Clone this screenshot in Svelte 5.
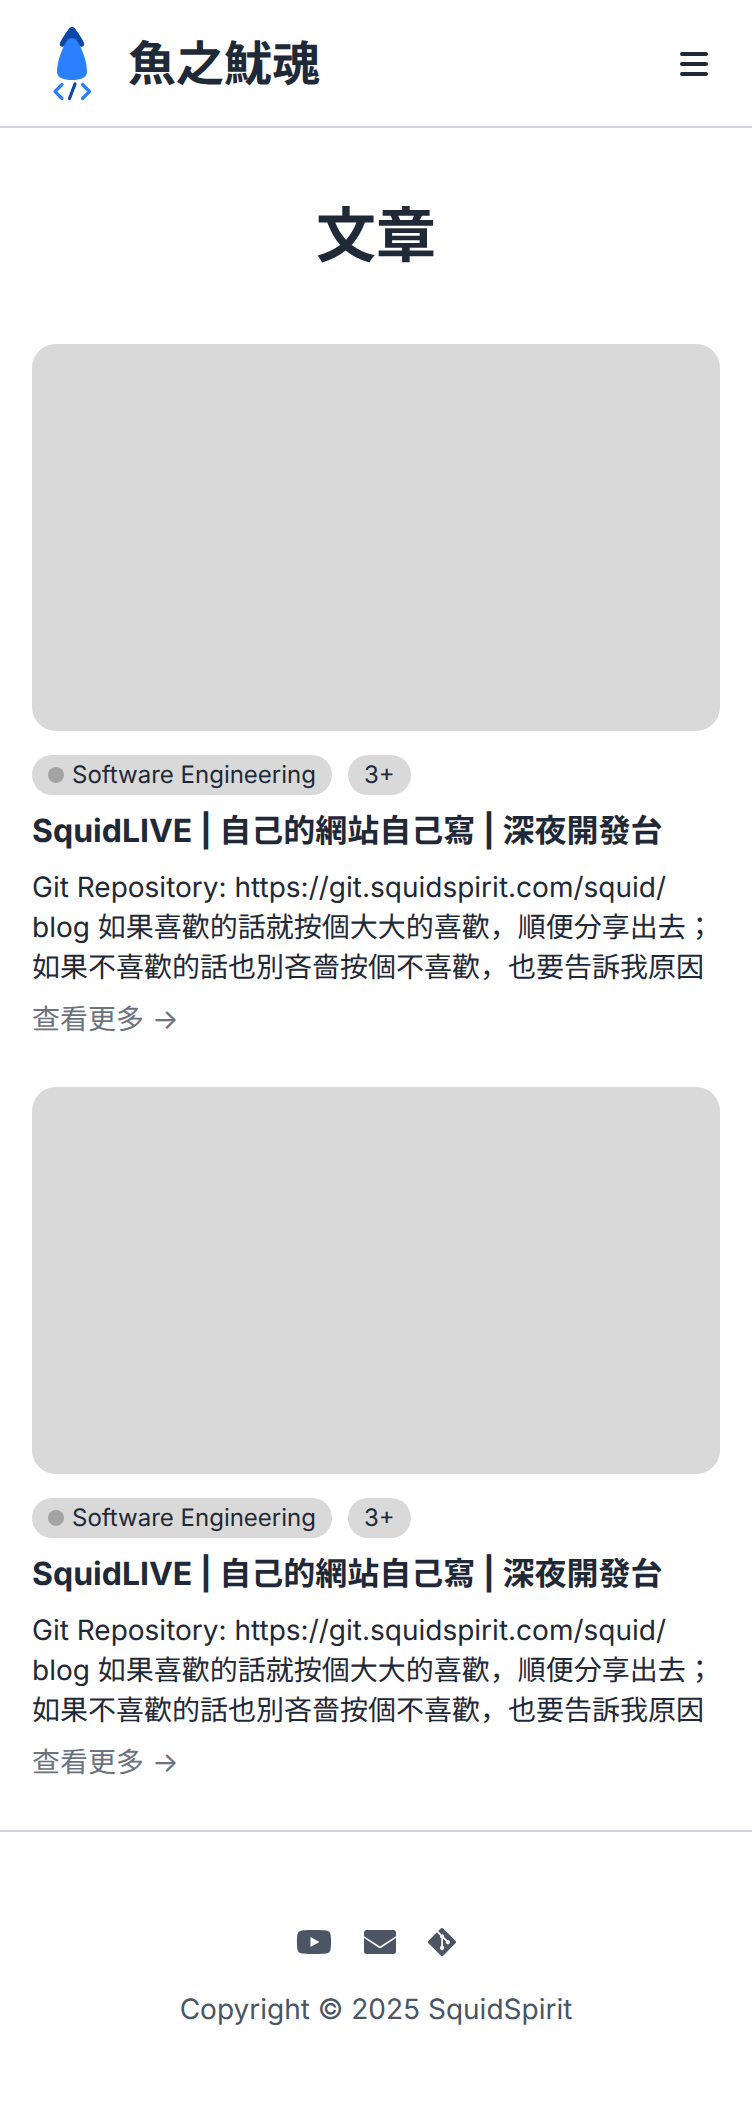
<script>
  const posts = [1, 2];
</script>

<div class="page">
  <header class="nav">
    <div class="brand">
      <svg class="logo" width="48" height="80" viewBox="48 24 48 80" aria-hidden="true">
        <path d="M72 27 C74 27 75 28 76 30 C79 34 82 38 84 43 C85 46 82 48 79 46 L65 46 C62 48 59 46 60 43 C62 38 65 34 68 30 C69 28 70 27 72 27 Z" fill="#0b48a8"/>
        <path d="M72 38 C75 38 77 40 79 44 C83 52 87 62 87 72 C87 78 80 80 72 80 C64 80 57 78 57 72 C57 62 61 52 65 44 C67 40 69 38 72 38 Z" fill="#2a7fff"/>
        <path d="M62 84.500 L55 91.500 L62 98.500 M82.500 84.500 L89.500 91.500 L82.500 98.500" fill="none" stroke="#2a7fff" stroke-width="3.200" stroke-linecap="round" stroke-linejoin="round"/>
        <path d="M75 84 L69.500 98.500" fill="none" stroke="#0b48a8" stroke-width="3.200" stroke-linecap="round"/>
      </svg>
      <span class="name">魚之魷魂</span>
    </div>
    <svg class="menu" width="28" height="32" viewBox="0 0 28 32" aria-hidden="true">
      <path d="M2 6h24M2 16h24M2 26h24" stroke="#1f2937" stroke-width="4" stroke-linecap="round"/>
    </svg>
  </header>

  <main class="main">
    <h1>文章</h1>
    <div class="list">
      {#each posts as post (post)}
        <article class="card">
          <div class="thumb"></div>
          <div class="chips">
            <span class="chip"><i class="dot"></i><span class="label">Software Engineering</span></span>
            <span class="chip more"><span class="label">3+</span></span>
          </div>
          <h2>SquidLIVE | 自己的網站自己寫 | 深夜開發台</h2>
          <p>Git Repository: https://git.squidspirit.com/squid/<wbr>blog 如果喜歡的話就按個大大的喜歡&#xFF0C;順便分享出去&#xFF1B;如果不喜歡的話也別吝嗇按個不喜歡&#xFF0C;也要告訴我原因</p>
          <a class="link" href="#top">查看更多 <span class="arrow">→</span></a>
        </article>
      {/each}
    </div>
  </main>

  <footer class="footer">
    <div class="icons">
      <svg width="36" height="32" viewBox="0 0 576 512" aria-hidden="true">
        <path d="M549.655 124.083c-6.281-23.65-24.787-42.276-48.284-48.597C458.781 64 288 64 288 64S117.22 64 74.629 75.486c-23.497 6.322-42.003 24.947-48.284 48.597-11.412 42.867-11.412 132.305-11.412 132.305s0 89.438 11.412 132.305c6.281 23.65 24.787 41.5 48.284 47.821C117.22 448 288 448 288 448s170.78 0 213.371-11.486c23.497-6.321 42.003-24.171 48.284-47.821 11.412-42.867 11.412-132.305 11.412-132.305s0-89.438-11.412-132.305zm-317.51 213.508V175.185l142.739 81.205-142.739 81.201z" fill="#4b5563"/>
      </svg>
      <svg width="32" height="32" viewBox="0 0 32 32" aria-hidden="true">
        <path d="M2.500 4 H29.500 C31 4 32 5 32 6.500 V10.200 L16 20.600 L0 10.200 V6.500 C0 5 1 4 2.500 4 Z" fill="#4b5563"/>
        <path d="M0 12 L14.800 21.700 C15.600 22.200 16.400 22.200 17.200 21.700 L32 12 V25.500 C32 27 31 28 29.500 28 H2.500 C1 28 0 27 0 25.500 Z" fill="#4b5563"/>
      </svg>
      <svg width="28" height="32" viewBox="0 0 448 512" aria-hidden="true">
        <path d="M439.55 236.05L244 40.45a28.87 28.87 0 0 0-40.81 0l-40.66 40.63 51.52 51.52c27.06-9.14 52.68 16.77 43.39 43.68l49.66 49.66c34.23-11.8 61.18 31 35.47 56.69-26.49 26.49-70.21-2.87-56-37.34L240.22 199v121.85c25.3 12.54 22.26 41.85 9.08 55a34.34 34.34 0 0 1-48.55 0c-17.57-17.6-11.07-46.91 11.25-56v-123c-20.8-8.51-24.6-30.74-18.64-45L142.57 101 8.45 235.14a28.86 28.86 0 0 0 0 40.81l195.61 195.6a28.86 28.86 0 0 0 40.8 0l194.69-194.69a28.86 28.86 0 0 0 0-40.81z" fill="#4b5563"/>
      </svg>
    </div>
    <div class="copy">Copyright © 2025 SquidSpirit</div>
  </footer>
</div>

<style>
  :global(body) {
    margin: 0;
    background: #fff;
  }
  .page {
    font-family: Inter, "Noto Sans CJK JP", sans-serif;
    color: #1f2937;
    text-rendering: geometricPrecision;
  }
  .nav {
    height: 128px;
    box-sizing: border-box;
    box-shadow: inset 0 -2px 0 #d1d5db;
    display: flex;
    align-items: center;
    justify-content: space-between;
    padding: 0 44px 0 48px;
  }
  .brand {
    display: flex;
    align-items: center;
    gap: 32px;
  }
  .logo {
    display: block;
  }
  .name {
    font-size: 48px;
    font-weight: 700;
    line-height: 72px;
  }
  .menu {
    display: block;
  }
  .main {
    padding: 66px 32px 0;
  }
  h1 {
    margin: 0;
    text-align: center;
    font-size: 60px;
    line-height: 84px;
    font-weight: 700;
  }
  .list {
    margin-top: 66px;
    display: flex;
    flex-direction: column;
    gap: 48px;
  }
  .card {
    display: flex;
    flex-direction: column;
  }
  .thumb {
    height: 387px;
    background: #d9d9d9;
    border-radius: 24px;
  }
  .chips {
    margin-top: 24px;
    display: flex;
    gap: 16px;
  }
  .chip {
    height: 40px;
    display: flex;
    align-items: center;
    gap: 8px;
    padding: 0 16px;
    border-radius: 20px;
    background: #d9d9d9;
    font-size: 24px;
    box-sizing: border-box;
  }
  .label {
    padding-bottom: 1px;
  }
  .dot {
    width: 16px;
    height: 16px;
    border-radius: 50%;
    background: #a3a3a3;
  }
  h2 {
    margin: 16px 0 0;
    font-size: 32px;
    line-height: 40px;
    font-weight: 700;
  }
  p {
    margin: 16px 0 0;
    font-size: 28px;
    line-height: 40px;
  }
  .link {
    margin-top: 12px;
    font-size: 28px;
    line-height: 40px;
    color: #6b7280;
    text-decoration: none;
  }
  .footer {
    margin-top: 48px;
    border-top: 2px solid #d1d5db;
    padding: 94px 0 100px;
    display: flex;
    flex-direction: column;
    align-items: center;
  }
  .icons {
    display: flex;
    align-items: center;
    gap: 32px;
  }
  .icons svg {
    display: block;
  }
  .copy {
    margin-top: 33px;
    font-size: 28px;
    line-height: 36px;
    color: #4b5563;
  }
</style>
